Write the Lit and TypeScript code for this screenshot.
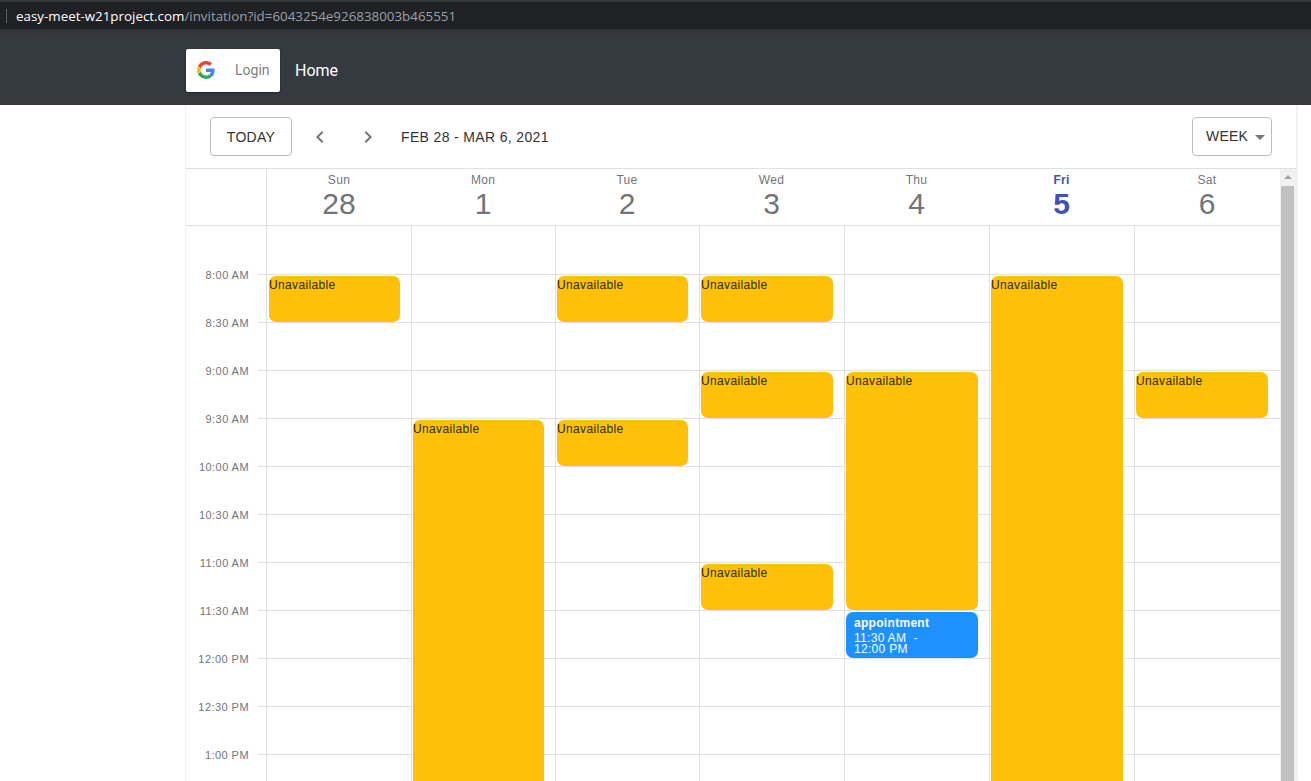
// Invitation page: browser chrome strip, navbar and a week scheduler.
import { LitElement, html, css, svg } from "lit";
import { customElement } from "lit/decorators.js";

const TIMES = [
  "8:00 AM", "8:30 AM", "9:00 AM", "9:30 AM", "10:00 AM", "10:30 AM", "11:00 AM",
  "11:30 AM", "12:00 PM", "12:30 PM", "1:00 PM",
];

const ROW_H = 48;

// from = half-hour slots after 8:00, len = number of slots
type Ev = { from: number; len: number; appt?: boolean };

const DAYS: { name: string; num: number; current?: boolean; events: Ev[] }[] = [
  { name: "Sun", num: 28, events: [{ from: 0, len: 1 }] },
  { name: "Mon", num: 1, events: [{ from: 3, len: 9 }] },
  { name: "Tue", num: 2, events: [{ from: 0, len: 1 }, { from: 3, len: 1 }] },
  { name: "Wed", num: 3, events: [{ from: 0, len: 1 }, { from: 2, len: 1 }, { from: 6, len: 1 }] },
  { name: "Thu", num: 4, events: [{ from: 2, len: 5 }, { from: 7, len: 1, appt: true }] },
  { name: "Fri", num: 5, current: true, events: [{ from: 0, len: 12 }] },
  { name: "Sat", num: 6, events: [{ from: 2, len: 1 }] },
];

const googleLogo = svg`
  <path fill="#EA4335" d="M24 9.5c3.54 0 6.71 1.22 9.21 3.6l6.85-6.85C35.9 2.38 30.47 0 24 0 14.62 0 6.51 5.38 2.56 13.22l7.98 6.19C12.43 13.72 17.74 9.5 24 9.5z"/>
  <path fill="#4285F4" d="M46.98 24.55c0-1.57-.15-3.09-.38-4.55H24v9.02h12.94c-.58 2.96-2.26 5.48-4.78 7.18l7.73 6c4.51-4.18 7.09-10.36 7.09-17.65z"/>
  <path fill="#FBBC05" d="M10.53 28.59c-.48-1.45-.76-2.99-.76-4.59s.27-3.14.76-4.59l-7.98-6.19C.92 16.46 0 20.12 0 24c0 3.88.92 7.54 2.56 10.78l7.97-6.19z"/>
  <path fill="#34A853" d="M24 48c6.48 0 11.93-2.13 15.89-5.81l-7.73-6c-2.15 1.45-4.92 2.3-8.16 2.3-6.26 0-11.57-4.22-13.47-9.91l-7.98 6.19C6.51 42.62 14.62 48 24 48z"/>
`;

@customElement("app-root")
export class AppRoot extends LitElement {
  static styles = css`
    :host {
      display: block;
      height: 781px;
      overflow: hidden;
      background: #fff;
      font-family: "Liberation Sans", Arial, sans-serif;
    }

    /* --- browser strip --- */
    .chrome {
      box-sizing: border-box;
      height: 35px;
      background: #202124;
      border-top: 2px solid #35363a;
      border-bottom: 5px solid #35363a;
      box-shadow: inset 0 -1px 0 #2a2b2e;
      display: flex;
      align-items: center;
      padding-left: 6px;
    }
    .chrome .sep {
      width: 1px;
      height: 14px;
      background: #5f6368;
      margin-right: 9px;
    }
    .url {
      font-family: "Open Sans", sans-serif;
      font-size: 13.36px;
      color: #9aa0a6;
      white-space: nowrap;
    }
    .url b {
      font-weight: 400;
      color: #fff;
    }

    /* --- navbar --- */
    .nav {
      height: 70px;
      background: #343a40;
      display: flex;
      align-items: center;
      padding-left: 186px;
      box-sizing: border-box;
      font-family: Roboto, sans-serif;
    }
    .login {
      width: 94px;
      height: 43px;
      background: #fff;
      border-radius: 2px;
      box-shadow: 0 1px 2px rgba(0, 0, 0, 0.4);
      display: flex;
      align-items: center;
      padding-left: 11px;
      box-sizing: border-box;
      font-size: 14px;
      color: rgba(0, 0, 0, 0.54);
    }
    .login svg {
      width: 18px;
      height: 18px;
      margin-right: 20px;
    }
    .home {
      margin-left: 15px;
      font-size: 16px;
      color: #fff;
    }

    /* --- scheduler card --- */
    .card {
      margin-left: 185px;
      width: 1111px;
      height: 676px;
      box-sizing: border-box;
      border-left: 1px solid #f2f2f2;
      box-shadow: 1px 0 2px rgba(0, 0, 0, 0.1);
      display: flex;
      flex-direction: column;
      overflow: hidden;
    }
    .toolbar {
      height: 63px;
      flex: none;
      box-sizing: border-box;
      padding: 12px 24px 0 24px;
      display: flex;
      align-items: flex-start;
      color: #3c4043;
      font-size: 14px;
    }
    .btn {
      box-sizing: border-box;
      height: 39px;
      border: 1px solid #bdbdbd;
      border-radius: 4px;
      display: flex;
      align-items: center;
      justify-content: center;
      letter-spacing: 0.3px;
      color: #333;
    }
    .btn-today {
      width: 82px;
      margin-right: 4px;
    }
    .nav-icon {
      width: 48px;
      height: 39px;
      display: flex;
      align-items: center;
      justify-content: center;
    }
    .nav-icon svg {
      width: 24px;
      height: 24px;
      fill: #757575;
    }
    .range {
      margin-left: 9px;
      line-height: 41px;
      letter-spacing: 0.35px;
      color: #333;
    }
    .btn-week {
      width: 80px;
      margin-left: auto;
      justify-content: flex-start;
      padding: 0 0 2px 13px;
      letter-spacing: 0.2px;
    }
    .caret {
      width: 0;
      height: 0;
      margin-left: 7px;
      margin-top: 4px;
      border-left: 5px solid transparent;
      border-right: 5px solid transparent;
      border-top: 5px solid #757575;
    }

    .split {
      flex: 1;
      min-height: 0;
      display: flex;
      border-top: 1px solid #e0e0e0;
    }
    .main {
      width: 1094px;
      flex: none;
      display: flex;
      flex-direction: column;
      min-height: 0;
    }

    /* shared column widths so head and body line up */
    .cols {
      display: grid;
      grid-template-columns: 80px 145px 144px 144px 145px 145px 145px 146px;
    }

    .head {
      height: 57px;
      flex: none;
      box-sizing: border-box;
      border-bottom: 1px solid #e0e0e0;
    }
    .head-day {
      box-sizing: border-box;
      text-align: center;
      color: #70757a;
      padding-top: 4px;
    }
    .head-day.sun {
      border-left: 1px solid #e0e0e0;
    }
    .head-day .name {
      font-size: 12px;
      line-height: 14px;
      letter-spacing: 0.3px;
    }
    .head-day .num {
      font-size: 30px;
      line-height: 34px;
    }
    .head-day.current {
      color: #3f51b5;
    }
    .head-day.current .name,
    .head-day.current .num {
      font-weight: 700;
    }

    .body {
      flex: 1;
      min-height: 0;
      overflow: hidden;
    }
    .gutter-row {
      display: flex;
      align-items: flex-end;
      height: 48px;
      box-sizing: border-box;
    }
    .gutter-row.first {
      height: 49px;
    }
    .time {
      width: 63px;
      flex: none;
      text-align: right;
      font-size: 11px;
      line-height: 14px;
      letter-spacing: 0.45px;
      color: #70757a;
      margin-bottom: -7px;
      white-space: nowrap;
    }
    .tick {
      flex: 1;
      height: 100%;
      box-sizing: border-box;
      margin-left: 9px;
      border-bottom: 1px solid #e0e0e0;
    }
    .day {
      position: relative;
      box-sizing: border-box;
      border-left: 1px solid #e0e0e0;
    }
    .slot {
      box-sizing: border-box;
      height: 48px;
      border-bottom: 1px solid #e0e0e0;
    }
    .slot.first {
      height: 49px;
    }

    /* events sit over the slot grid */
    .ev {
      position: absolute;
      left: 1px;
      right: 11px;
      box-sizing: border-box;
      border-radius: 7px;
      background: #ffc107;
      color: #2a2a10;
      font-size: 12px;
      line-height: 14px;
      letter-spacing: 0.35px;
      padding-top: 2px;
      overflow: hidden;
    }
    .day.sun .ev {
      left: 2px;
    }
    .day.sat .ev {
      right: 12px;
    }
    .ev.appt {
      background: #1e90ff;
      color: #fff;
      padding: 4px 0 0 8px;
      letter-spacing: 0.3px;
    }
    .ev.appt .title {
      font-weight: 700;
    }
    .ev.appt .when {
      line-height: 11px;
      margin-top: 3px;
      white-space: pre;
      letter-spacing: 0.3px;
    }

    /* --- scrollbar --- */
    .scrollbar {
      width: 16px;
      flex: none;
      background: #f1f1f1;
      display: flex;
      flex-direction: column;
      align-items: center;
    }
    .scrollbar .arrow {
      width: 0;
      height: 0;
      margin-top: 6px;
      margin-bottom: 7px;
      border-left: 4px solid transparent;
      border-right: 4px solid transparent;
      border-bottom: 4px solid #a3a3a3;
      flex: none;
    }
    .scrollbar .thumb {
      width: 13px;
      margin-right: 1px;
      flex: 1;
      background: #c1c1c1;
    }
  `;

  private renderDay(day: (typeof DAYS)[number], i: number) {
    const cls = i === 0 ? "day sun" : i === 6 ? "day sat" : "day";
    return html`
      <div class=${cls}>
        <div class="slot first"></div>
        ${TIMES.map(() => html`<div class="slot"></div>`)}
        ${day.events.map((ev) => {
          const style = `top:${50 + ev.from * ROW_H}px;height:${ev.len * ROW_H - 2}px`;
          return ev.appt
            ? html`<div class="ev appt" style=${style}>
                <div class="title">appointment</div>
                <div class="when">11:30 AM  -\n12:00 PM</div>
              </div>`
            : html`<div class="ev" style=${style}>Unavailable</div>`;
        })}
      </div>
    `;
  }

  render() {
    return html`
      <div class="chrome">
        <span class="sep"></span>
        <span class="url"><b>easy-meet-w21project.com</b>/invitation?id=6043254e926838003b465551</span>
      </div>

      <div class="nav">
        <div class="login">
          <svg viewBox="0 0 48 48">${googleLogo}</svg>
          <span>Login</span>
        </div>
        <span class="home">Home</span>
      </div>

      <div class="card">
        <div class="toolbar">
          <div class="btn btn-today">TODAY</div>
          <div class="nav-icon">
            <svg viewBox="0 0 24 24"><path d="M15.41 7.41L14 6l-6 6 6 6 1.41-1.41L10.83 12z" /></svg>
          </div>
          <div class="nav-icon">
            <svg viewBox="0 0 24 24"><path d="M10 6L8.59 7.41 13.17 12l-4.58 4.59L10 18l6-6z" /></svg>
          </div>
          <div class="range">FEB 28 - MAR 6, 2021</div>
          <div class="btn btn-week">WEEK<span class="caret"></span></div>
        </div>

        <div class="split">
          <div class="main">
            <div class="head cols">
              <div></div>
              ${DAYS.map(
                (d, i) => html`
                  <div class="head-day ${d.current ? "current" : ""} ${i === 0 ? "sun" : ""}">
                    <div class="name">${d.name}</div>
                    <div class="num">${d.num}</div>
                  </div>
                `,
              )}
            </div>
            <div class="body">
              <div class="cols">
                <div>
                  ${TIMES.map(
                    (t, i) => html`
                      <div class="gutter-row ${i === 0 ? "first" : ""}">
                        <div class="time">${t}</div>
                        <div class="tick"></div>
                      </div>
                    `,
                  )}
                  <div class="gutter-row"><div class="time"></div><div class="tick"></div></div>
                </div>
                ${DAYS.map((d, i) => this.renderDay(d, i))}
              </div>
            </div>
          </div>
          <div class="scrollbar">
            <span class="arrow"></span>
            <div class="thumb"></div>
          </div>
        </div>
      </div>
    `;
  }
}
